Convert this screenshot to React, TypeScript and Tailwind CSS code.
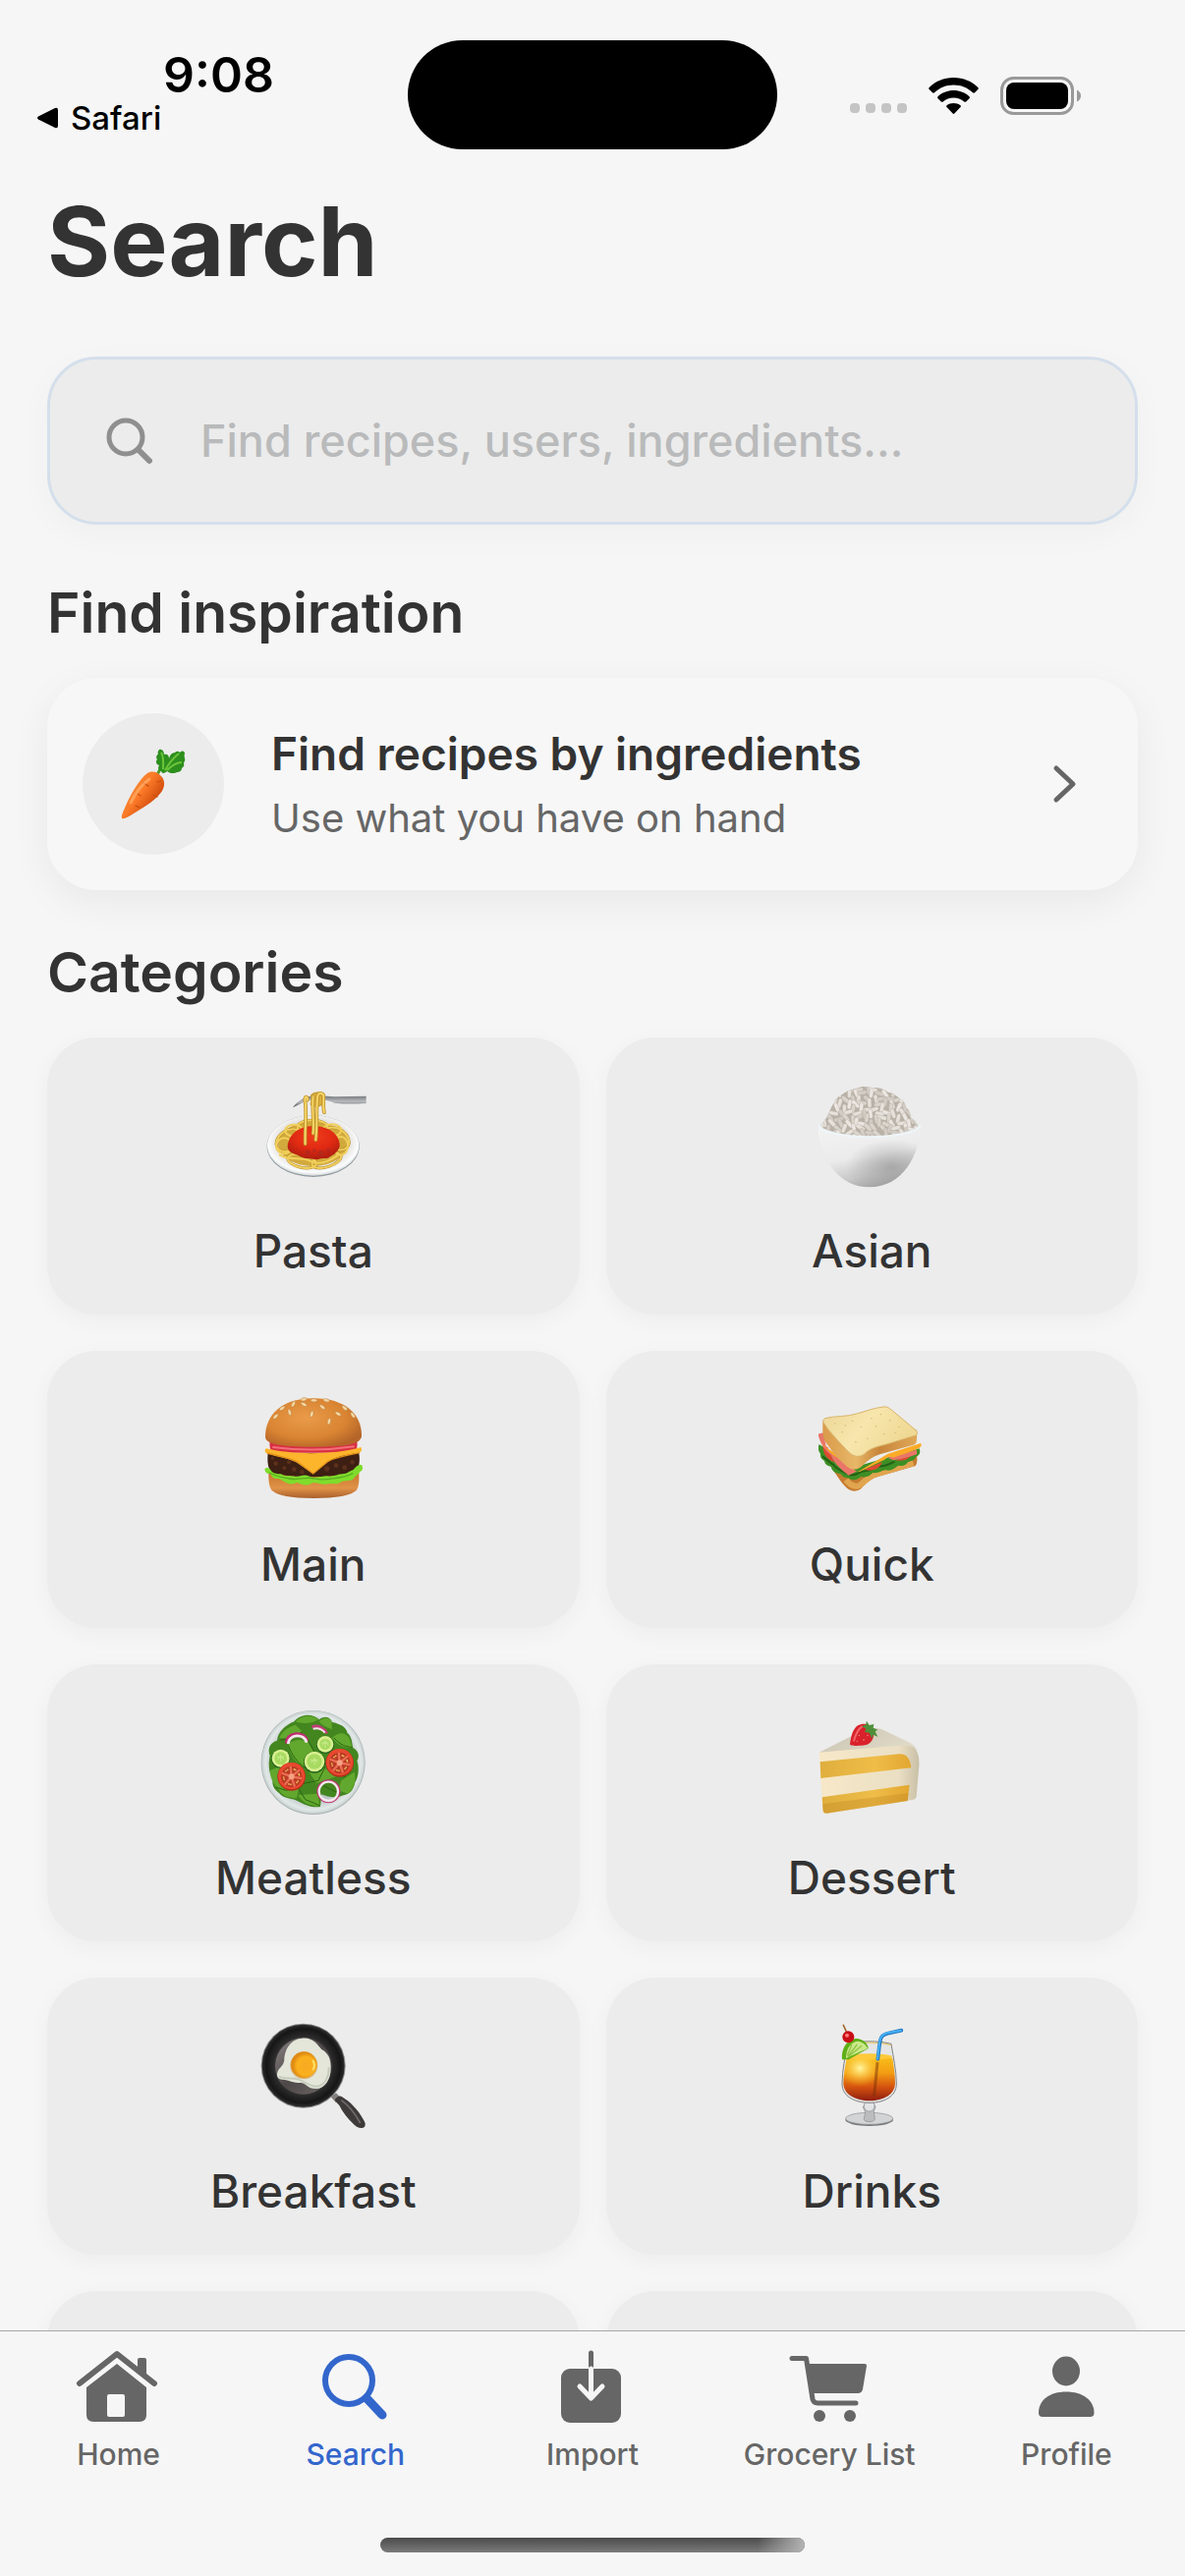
import type { ReactNode } from "react";

const grains = Array.from({ length: 14 * 11 }, (_, i) => {
  const col = i % 14;
  const row = Math.floor(i / 14);
  const noise = (n: number) => Math.abs(Math.sin((i + 1) * n) * 9301) % 1;
  return {
    x: 106 + col * 23 + (row % 2) * 11 + noise(3.1) * 10,
    y: 84 + row * 15 + noise(5.7) * 8,
    turn: noise(7.3) * 150 - 35,
    tone: ["#e6e1da", "#dad5cc", "#d3cdc6", "#ebe6e1"][Math.floor(noise(2.3) * 4)],
  };
});

function Pasta() {
  return (
    <svg viewBox="103 69 324 324" className="size-27" aria-hidden="true">
      <defs>
        <radialGradient id="plate" cx="50%" cy="45%" r="55%">
          <stop offset="0.7" stopColor="#e4e2e0" />
          <stop offset="0.9" stopColor="#fbfcfc" />
          <stop offset="1" stopColor="#d3d8db" />
        </radialGradient>
        <radialGradient id="sauce" cx="50%" cy="30%" r="65%">
          <stop offset="0" stopColor="#f03c1c" />
          <stop offset="0.6" stopColor="#e02a12" />
          <stop offset="1" stopColor="#b51f10" />
        </radialGradient>
        <linearGradient id="fork" x1="0" x2="0" y1="0" y2="1">
          <stop offset="0" stopColor="#707375" />
          <stop offset="0.5" stopColor="#b9bcbe" />
          <stop offset="1" stopColor="#4e5052" />
        </linearGradient>
      </defs>
      <ellipse cx="264" cy="263" rx="141" ry="94" fill="#8f989d" />
      <ellipse cx="264" cy="261" rx="140" ry="92" fill="url(#plate)" />
      <ellipse cx="263" cy="256" rx="106" ry="68" fill="#d2a93c" />
      <g fill="none" strokeLinecap="round">
        <g stroke="#b98a26" strokeWidth="9">
          <ellipse cx="190" cy="245" rx="42" ry="30" transform="rotate(-35 190 245)" />
          <ellipse cx="335" cy="240" rx="42" ry="30" transform="rotate(35 335 240)" />
          <ellipse cx="230" cy="308" rx="44" ry="20" transform="rotate(12 230 308)" />
          <ellipse cx="305" cy="306" rx="46" ry="20" transform="rotate(-18 305 306)" />
          <ellipse cx="262" cy="204" rx="46" ry="20" />
        </g>
        <g stroke="#f0cf5b" strokeWidth="6">
          <ellipse cx="190" cy="245" rx="42" ry="30" transform="rotate(-35 190 245)" />
          <ellipse cx="335" cy="240" rx="42" ry="30" transform="rotate(35 335 240)" />
          <ellipse cx="230" cy="308" rx="44" ry="20" transform="rotate(12 230 308)" />
          <ellipse cx="305" cy="306" rx="46" ry="20" transform="rotate(-18 305 306)" />
          <ellipse cx="262" cy="204" rx="46" ry="20" />
          <ellipse cx="176" cy="262" rx="25" ry="24" />
          <ellipse cx="348" cy="262" rx="22" ry="28" />
          <ellipse cx="205" cy="215" rx="26" ry="18" />
          <ellipse cx="322" cy="214" rx="28" ry="18" />
          <path d="M162 290c30 20 60 2 92 18s62 0 86-18" />
        </g>
      </g>
      <path d="M186 264c4-38 34-62 79-62 48 0 77 24 80 54 2 18-14 32-28 38-10 10-24 4-34 8-14 4-24-2-36-2-18 0-24-8-36-12-14-4-24-10-25-24z" fill="url(#sauce)" />
      <g fill="#a82a24" opacity="0.55">
        <circle cx="248" cy="282" r="8" /><circle cx="268" cy="276" r="6" /><circle cx="288" cy="284" r="9" /><circle cx="310" cy="276" r="6" />
      </g>
      <path d="M202 145c14-22 40-35 68-37l60 4 96-2v22c-34 2-66 3-96-1-20-8-48-14-76-9-18 4-34 14-52 23z" fill="url(#fork)" />
      <g fill="none" strokeLinecap="round">
        <path d="M258 108c10-12 30-12 34 2v24c-8 10-28 10-36 0" fill="#d9ae3e" stroke="#c69b33" strokeWidth="4" />
        <g stroke="#c0922c" strokeWidth="11">
          <path d="M240 256c-2-48 6-92-1-136 0-10 8-10 8 2" />
          <path d="M264 224c4-36-4-74 0-112M272 244c6-50 0-92 6-136 4-10 20-8 18 6 0 16-2 30 2 46" />
        </g>
        <g stroke="#f5d667" strokeWidth="6">
          <path d="M240 256c-2-48 6-92-1-136 0-10 8-10 8 2" />
          <path d="M264 224c4-36-4-74 0-112M272 244c6-50 0-92 6-136 4-10 20-8 18 6 0 16-2 30 2 46" />
        </g>
      </g>
    </svg>
  );
}

function Rice() {
  return (
    <svg viewBox="100 69 324 324" className="size-27" aria-hidden="true">
      <defs>
        <linearGradient id="bowl" x1="0.3" y1="0" x2="0.6" y2="1">
          <stop offset="0" stopColor="#f2f2f2" />
          <stop offset="0.5" stopColor="#ebebeb" />
          <stop offset="0.8" stopColor="#c9c9c9" />
          <stop offset="1" stopColor="#a5a5a5" />
        </linearGradient>
        <radialGradient id="bowlShade" cx="72%" cy="68%" r="45%">
          <stop offset="0" stopColor="#8e8e90" stopOpacity="0.6" />
          <stop offset="1" stopColor="#8e8e90" stopOpacity="0" />
        </radialGradient>
        <clipPath id="mound">
          <path d="M104 204c10-16 22-26 28-42 10-24 20-50 42-58 12-12 34-14 50-20 14-6 26 0 40 0 18 0 36 4 48 14 14 2 26 10 36 20 14 6 16 18 20 28 14 10 10 22 16 32 10 6 14 14 22 26-80 40-220 40-302 0z" />
        </clipPath>
      </defs>
      <g clipPath="url(#mound)">
        <rect x="100" y="76" width="320" height="170" fill="#b9b2a8" />
        {grains.map((g, i) => (
          <rect key={i} x={g.x - 15} y={g.y - 6} width="30" height="12" rx="6" fill={g.tone} stroke="#b0a89d" strokeWidth="1" transform={`rotate(${g.turn} ${g.x} ${g.y})`} />
        ))}
      </g>
      <path d="M98 198c2 90 56 190 158 190s154-100 156-190c-4 20-66 39-157 39S104 222 98 198z" fill="url(#bowl)" />
      <path d="M98 198c2 90 56 190 158 190s154-100 156-190c-4 20-66 39-157 39S104 222 98 198z" fill="url(#bowlShade)" />
      <path d="M100 198c6 20 66 37 155 37s150-17 156-37" fill="none" stroke="#eef5f8" strokeWidth="7" />
    </svg>
  );
}

function Burger() {
  return (
    <svg viewBox="103 66 324 324" className="size-27" aria-hidden="true">
      <defs>
        <radialGradient id="bun" cx="42%" cy="40%" r="65%">
          <stop offset="0" stopColor="#e99b4a" />
          <stop offset="0.65" stopColor="#d98432" />
          <stop offset="1" stopColor="#b5652a" />
        </radialGradient>
        <linearGradient id="heel" x1="0" y1="0" x2="0" y2="1">
          <stop offset="0" stopColor="#c9772e" />
          <stop offset="0.6" stopColor="#e09348" />
          <stop offset="1" stopColor="#a95f2b" />
        </linearGradient>
      </defs>
      <path d="M128 300h276c0 20 2 40-8 54-16 16-60 24-130 24s-112-8-128-24c-10-14-10-34-10-54z" fill="url(#heel)" />
      <path d="M126 240h278c4 24 0 46-10 60-80 18-180 16-256 2-14-16-14-42-12-62z" fill="#3d2013" />
      <g fill="#5c301c">
        <circle cx="150" cy="272" r="7" /><circle cx="176" cy="286" r="6" /><circle cx="206" cy="290" r="7" /><circle cx="190" cy="268" r="6" /><circle cx="306" cy="288" r="8" /><circle cx="334" cy="278" r="7" /><circle cx="360" cy="284" r="7" /><circle cx="384" cy="268" r="7" /><circle cx="230" cy="298" r="7" /><circle cx="140" cy="256" r="5" />
      </g>
      <path d="M116 290c6-10 14-2 16-2 6 14 20 16 34 16 14 10 30 4 44 8 14 0 26-8 40-2 22 10 40 0 56 0 16 4 34-6 48-6 14 0 22-10 32-12 8-10 14-18 26-16 6 8 4 18-6 22-4 10-14 12-18 20-12 10-26 4-38 10-12 10-26 4-40 6-20 6-34-8-50-2-16 10-32 4-44-2-12 4-22 8-34 0-14-6-18-14-32-12-12-2-12-10-18-16-10 4-16-6-16-14z" fill="#7fdc2c" />
      <path d="M130 300c20 12 40 14 60 18s40 0 56-2 40 8 60 4 50-2 80-18" fill="none" stroke="#5bae1f" strokeWidth="4" />
      <path d="M132 205h266c2 12 0 24-6 34H140c-8-8-10-22-8-34z" fill="#d92f42" />
      <path d="M140 222c80 10 170 10 250-2" fill="none" stroke="#f2707a" strokeWidth="6" />
      <path d="M120 226c80 20 210 20 290-4 4 6 2 12-2 16-40 8-70 12-96 26l-48 40-52-36c-30-14-62-18-92-28-4-4-4-10 0-14z" fill="#fdb52c" />
      <path d="M124 240c40 12 70 14 94 28l46 35 46-38c26-14 60-18 96-26" fill="none" stroke="#e3921a" strokeWidth="4" />
      <path d="M118 190c0-66 50-117 147-117s147 48 147 114c0 16-20 24-40 28-60 8-154 8-214 0-22-4-40-10-40-25z" fill="url(#bun)" />
      <g fill="#f3d7a4" stroke="#bd7b35" strokeWidth="1.5">
        {[[150, 128, 45], [170, 103, 55], [192, 115, -15], [235, 91, -60], [260, 120, 15], [292, 99, -50], [313, 143, 15], [340, 120, -60], [360, 102, -50], [385, 124, -35], [204, 90, 30], [267, 79, 90], [304, 79, -75], [236, 76, 80]].map(([x, y, r]) => (
          <path key={`${x}-${y}`} d="M0-11c6 6 7 18 0 22-7-4-6-16 0-22z" transform={`translate(${x} ${y}) rotate(${r})`} />
        ))}
      </g>
    </svg>
  );
}

function Sandwich() {
  return (
    <svg viewBox="100 66 324 324" className="size-27" aria-hidden="true">
      <defs>
        <linearGradient id="slice" x1="0" y1="0" x2="1" y2="0.4">
          <stop offset="0" stopColor="#ecd695" />
          <stop offset="0.5" stopColor="#f7e6ad" />
          <stop offset="1" stopColor="#efd893" />
        </linearGradient>
        <linearGradient id="crust" x1="0" y1="0" x2="1" y2="0">
          <stop offset="0" stopColor="#d99a4a" />
          <stop offset="0.35" stopColor="#e8b768" />
          <stop offset="0.6" stopColor="#c98539" />
          <stop offset="1" stopColor="#dfa858" />
        </linearGradient>
      </defs>
      <path d="M130 262c16 36 40 70 58 86 18 14 38 8 48-6 16-18 28-24 46-30l112-32c8-4 8-20 6-40L220 300z" fill="#c57c31" />
      <path d="M184 322c10 14 24 22 40 18 18-12 26-28 52-36l114-33" fill="none" stroke="#e2a54f" strokeWidth="18" />
      <path d="M102 214c-6 10-2 20 4 28-2 12 6 18 12 22 2 14 12 14 20 18 4 18 20 20 30 22 8 14 22 10 30 16 14 6 24-2 32-8 16 4 26-2 36-12 18 4 26-8 40-8 16 4 26-6 38-14 16 4 26-4 30-12 14-2 22-6 22-14 14-4 16-14 12-26L220 280z" fill="#3e8f25" />
      <path d="M112 250c12 6 20 20 34 26 12 16 28 20 44 28 18 10 30-4 44-8 20 0 34-10 48-16 22 2 34-6 50-14" fill="none" stroke="#226115" strokeWidth="6" />
      <path d="M114 216c-2 24 10 42 34 52l-20-46zM240 290c20 8 48 0 54-22zM336 262c16 4 36 0 46-14z" fill="#dd4a31" />
      <path d="M98 182l16-4 10 44 92 74-24 12c-22-16-44-36-54-62-20-16-32-34-40-64zM312 254l88-24v14c-24 8-44 14-72 18z" fill="#e97669" />
      <path d="M102 194c12 20 20 30 36 38 30 22 50 50 82 66l92-56 100-32c4 4 2 12-4 14-24 12-52 20-80 30-10-6-18-2-26 6l-78 38c-26-6-44-30-74-48-24-18-36-36-48-56z" fill="#fcaa28" />
      <path d="M113 148c0-8 4-12 10-12 2 24 34 60 60 90 18 22 40 22 54 4 14-20 32-22 56-30l106-32c2 14 2 30 0 38-2 6-6 8-12 10l-86 24c-32 8-48 20-66 38-20 18-38 14-54-2-26-22-40-44-60-70-10-16-8-36-8-58z" fill="url(#crust)" />
      <path d="M120 134c30-8 64-4 96-14 30-8 54-18 82-21 12-2 18 4 26 10l74 62c6 6 4 14-4 16l-86 26c-28 8-48 10-68 30-16 12-34 8-48-6-28-30-56-58-74-86-6-8-4-14 2-17z" fill="url(#slice)" stroke="#d9b56b" strokeWidth="3" />
      <g fill="#cfb06a">
        {[[150, 150], [172, 176], [204, 142], [230, 160], [262, 134], [290, 122], [318, 140], [346, 160], [300, 182], [214, 206], [250, 196], [276, 158], [182, 156], [334, 178]].map(([x, y]) => <circle key={x} cx={x} cy={y} r="2" />)}
      </g>
    </svg>
  );
}

function Tomato({ x, y }: { x: number; y: number }) {
  return (
    <g transform={`translate(${x} ${y})`}>
      <circle r="43" fill="#b52d1c" />
      <circle r="41" cy="-2" fill="#e8492f" />
      <circle r="32" fill="#bb3a26" />
      <g stroke="#e96f52" strokeWidth="7" strokeLinecap="round">
        {[10, 72, 130, 200, 265, 320].map((a) => <line key={a} x2="29" transform={`rotate(${a})`} />)}
      </g>
      <circle r="9" fill="#f5a183" />
      <g fill="#eac25c">
        {[35, 48, 95, 110, 160, 175, 225, 240, 290, 300, 340, 350].map((a) => <circle key={a} cx="24" r="2.6" transform={`rotate(${a})`} />)}
      </g>
    </g>
  );
}

function Cucumber({ x, y, r }: { x: number; y: number; r: number }) {
  return (
    <g transform={`translate(${x} ${y})`}>
      <circle r={r} cy="2" fill="#1f5c1a" />
      <circle r={r - 2} fill="#d9f08f" />
      <circle r={r - 10} fill="#a8da62" />
      <path d="M-10 4l10-12 10 12M-12-4h22M0-12v22" stroke="#c8ec8c" strokeWidth="3" fill="none" />
    </g>
  );
}

function Salad() {
  return (
    <svg viewBox="103 63 324 324" className="size-27" aria-hidden="true">
      <defs>
        <radialGradient id="dish">
          <stop offset="0.75" stopColor="#bcc6c6" />
          <stop offset="0.93" stopColor="#e2e8e8" />
          <stop offset="1" stopColor="#c8d0d0" />
        </radialGradient>
      </defs>
      <circle cx="264" cy="225" r="159" fill="#a8b1b1" />
      <circle cx="264" cy="224" r="157" fill="url(#dish)" />
      <path d="M206 100c18-24 58-26 76-6 14-12 34-10 40 8 22 4 44 14 46 32 16 12 14 32 18 46 18 10 20 26 12 40 8 22 4 50-6 66-4 22-16 38-40 40-20 10-42 4-62-4l-4 38c-26 4-48-6-66-16-20-12-46-6-60-26-14-10-24-24-18-42-16-20-14-52-10-72-8-20 0-40 22-46 2-26 24-46 52-58z" fill="#43861f" />
      <g fill="#62a82e">
        <path d="M210 100c20-20 52-22 70-6-16 10-44 16-70 6zM282 100c12-14 28-14 38-2l2 26c-16-6-30-12-40-24zM160 150c10-22 28-34 50-40l20 20c-20 14-44 24-70 20z" />
        <path d="M186 170c18-16 40-18 62-8l26 44-36 34c-26-12-44-36-52-70zM322 150c20-20 40-18 52 0l10 30c-26 2-44-8-62-30z" />
        <path d="M132 250l36-16 40 70-40 10c-20-14-34-34-36-64zM250 252l44-14 40 30-60 20zM350 280l40-26c6 24 0 50-20 66l-30-10z" />
        <path d="M160 310l60-6-6 30c-22 0-44-6-54-24zM218 324l60-4 6 38c-26 0-52-8-66-34z" />
      </g>
      <g fill="none" stroke="#2a6312" strokeWidth="3">
        <path d="M164 156c30 0 50-14 66-24M188 172c10 30 30 54 50 68M250 160l26 46M300 240l-20 40-50 10M336 316l-40-20M220 304l20 34 44 18M328 150c20 22 36 28 56 28M384 220l-26 50M150 300l30 10 30-6" />
      </g>
      <path d="M183 166c-2-36 58-38 62-6" fill="none" stroke="#bf2e70" strokeWidth="10" />
      <path d="M188 168c0-30 50-34 56-4" fill="none" stroke="#f6e7ef" strokeWidth="8" />
      <path d="M260 116c20-6 38 4 46 20" fill="none" stroke="#c53a78" strokeWidth="9" />
      <path d="M264 122c16-4 28 2 36 12" fill="none" stroke="#f6e2ec" strokeWidth="6" />
      <Cucumber x={301} y={169} r={27} />
      <Cucumber x={165} y={212} r={29} />
      <Cucumber x={268} y={222} r={33} />
      <Tomato x={198} y={268} />
      <Tomato x={345} y={226} />
      <circle cx="311" cy="313" r="33" fill="none" stroke="#bd3572" strokeWidth="6" />
      <circle cx="311" cy="313" r="29" fill="none" stroke="#f3e9ee" strokeWidth="7" />
    </svg>
  );
}

function Cake() {
  return (
    <svg viewBox="100 63 324 324" className="size-27" aria-hidden="true">
      <defs>
        <linearGradient id="icing" x1="0" y1="0" x2="1" y2="0.5">
          <stop offset="0" stopColor="#c9c2b0" />
          <stop offset="1" stopColor="#dfd9c7" />
        </linearGradient>
        <linearGradient id="sponge" x1="0" y1="0" x2="1" y2="0">
          <stop offset="0" stopColor="#dfae3d" />
          <stop offset="0.6" stopColor="#efbd48" />
          <stop offset="1" stopColor="#e2a731" />
        </linearGradient>
        <linearGradient id="cream" x1="0" y1="0" x2="1" y2="0">
          <stop offset="0" stopColor="#f7e8c8" />
          <stop offset="0.8" stopColor="#eadfc4" />
          <stop offset="1" stopColor="#c8bfa6" />
        </linearGradient>
      </defs>
      <path d="M102 196l8-6 260-26c28 10 40 36 37 72l-8 92c-2 8-6 10-12 11l-265 41c-6 0-8-2-9-8z" fill="url(#cream)" />
      <path d="M102 194l140-70c16-6 34-6 52 0l80 38c16 8 24 16 28 28-8-12-24-18-42-18z" fill="url(#icing)" />
      <path d="M105 223l242-24c20-2 34 14 36 42L107 273z" fill="url(#sponge)" />
      <path d="M111 331l267-38-6 49-247 38c-8 0-10-2-11-8z" fill="url(#sponge)" />
      <path d="M112 352l263-34-3 24-247 38c-8 0-10-2-11-8z" fill="#b87f1d" opacity="0.3" />
      <path d="M196 168c4-24 8-44 24-56 16-10 44-4 48 18 4 20-8 40-26 42-14 2-48 4-46-4z" fill="#d9222b" />
      <path d="M208 158c6-20 12-34 24-42" fill="none" stroke="#f2656a" strokeWidth="6" strokeLinecap="round" />
      <g fill="#f5a09b"><circle cx="224" cy="142" r="2" /><circle cx="238" cy="156" r="2" /><circle cx="250" cy="142" r="2" /><circle cx="218" cy="160" r="2" /></g>
      <path d="M232 114l12-4 3-12 8 13 14-3-2 11 14 6-8 5 8 16-14-6-4 12-8-18-14-2 4-10z" fill="#4f8f3a" />
    </svg>
  );
}

function FryingPan() {
  return (
    <svg viewBox="103 60 324 324" className="size-27" aria-hidden="true">
      <defs>
        <radialGradient id="pan">
          <stop offset="0.62" stopColor="#4c4848" />
          <stop offset="0.72" stopColor="#2b2a2a" />
          <stop offset="0.9" stopColor="#161616" />
          <stop offset="1" stopColor="#2c2c2c" />
        </radialGradient>
        <linearGradient id="base" x1="0" y1="0" x2="1" y2="1">
          <stop offset="0" stopColor="#8b8585" />
          <stop offset="0.5" stopColor="#4d4847" />
          <stop offset="1" stopColor="#6e6867" />
        </linearGradient>
        <radialGradient id="yolk" cx="58%" cy="55%">
          <stop offset="0" stopColor="#f7a823" />
          <stop offset="0.7" stopColor="#f9b11e" />
          <stop offset="1" stopColor="#e18b12" />
        </radialGradient>
      </defs>
      <path d="M318 286l16-12 16 16-16 14z" fill="#85817f" />
      <path d="M330 296c4-10 16-16 22-10 24 14 48 38 66 70 8 12 6 22-2 24-8 4-20-2-28-10-20-20-34-38-44-58-6-8-10-10-14-16z" fill="#3e3a3a" />
      <path d="M350 296c22 16 42 40 58 70" fill="none" stroke="#716b6b" strokeWidth="5" />
      <circle cx="234" cy="191" r="129" fill="#858585" />
      <circle cx="234" cy="191" r="126" fill="url(#pan)" />
      <circle cx="234" cy="192" r="86" fill="url(#base)" />
      <path d="M176 170c2-30 20-62 56-63 34-2 44 20 58 34 22 12 28 30 28 56 0 36-18 64-46 64-26 0-28-16-44-18-26 0-38-8-56-10-22 2-22-22-10-34 8-10 14-16 14-29z" fill="#e4e6da" />
      <path d="M160 224c20 10 40 2 58 8s30 20 54 22c28 0 40-28 40-58" fill="none" stroke="#c6ccbc" strokeWidth="6" />
      <circle cx="236" cy="190" r="42" fill="#c88a32" opacity="0.5" />
      <circle cx="236" cy="188" r="40" fill="url(#yolk)" />
      <path d="M264 176c5 9 5 18 0 26" fill="none" stroke="#ffe06a" strokeWidth="6" strokeLinecap="round" />
    </svg>
  );
}

function Drink() {
  return (
    <svg viewBox="100 60 324 324" className="size-27" aria-hidden="true">
      <defs>
        <linearGradient id="juice" x1="0" y1="0" x2="0" y2="1">
          <stop offset="0" stopColor="#f9c51c" />
          <stop offset="0.4" stopColor="#f39c13" />
          <stop offset="0.7" stopColor="#d4530f" />
          <stop offset="1" stopColor="#8f1d10" />
        </linearGradient>
        <radialGradient id="glow" cx="32%" cy="30%" r="40%">
          <stop offset="0" stopColor="#fff6a0" />
          <stop offset="1" stopColor="#ffc21a" stopOpacity="0" />
        </radialGradient>
      </defs>
      <ellipse cx="255" cy="356" rx="73" ry="19" fill="#77797a" />
      <ellipse cx="255" cy="352" rx="72" ry="18" fill="#d3d4d5" stroke="#8e9091" strokeWidth="2" />
      <path d="M246 298h20l8 20c-4 8-6 12-4 22 2 14 6 20-14 22-22-2-18-8-14-22 2-10-2-14-6-22z" fill="#bcbdbe" stroke="#85878a" strokeWidth="2" />
      <circle cx="255" cy="314" r="16" fill="#e3e4e5" stroke="#8e9091" strokeWidth="2" />
      <path d="M188 124c40-10 96-10 134 0 6 40 16 80 16 122 0 38-36 58-82 58s-84-20-84-58c0-42 10-82 16-122z" fill="#e4e5e4" stroke="#808284" strokeWidth="3" />
      <path d="M186 168c44-16 98-16 140 0 4 26 8 48 8 76 0 34-34 54-78 54s-80-20-80-54c0-26 6-50 10-76z" fill="url(#juice)" />
      <path d="M186 168c44-16 98-16 140 0 4 26 8 48 8 76 0 34-34 54-78 54s-80-20-80-54c0-26 6-50 10-76z" fill="url(#glow)" />
      <ellipse cx="256" cy="163" rx="69" ry="9" fill="#ffc93a" />
      <path d="M190 126c40-8 94-8 132 2" fill="none" stroke="#e8c355" strokeWidth="3" />
      <path d="M280 180l-10 104" stroke="#7b3208" strokeWidth="9" opacity="0.5" />
      <path d="M281 170c4-26 4-48 10-64 4-10 12-12 20-14l42-9" fill="none" stroke="#1f77c4" strokeWidth="11" strokeLinecap="round" />
      <path d="M280 170c4-26 4-48 10-64 4-10 12-13 20-15l42-8" fill="none" stroke="#48b1f4" strokeWidth="6" strokeLinecap="round" />
      <path d="M172 172c-4-40 22-66 48-64 20 4 32 18 32 30l-60 34z" fill="#5fae17" />
      <path d="M184 168c0-32 16-50 36-52 16 2 26 12 30 22z" fill="#cbe88b" />
      <path d="M190 162l28-36M190 164l42-34M188 160l14-34" stroke="#8fc444" strokeWidth="4" />
      <path d="M176 67l12 26" stroke="#a36a33" strokeWidth="5" strokeLinecap="round" />
      <circle cx="191" cy="103" r="18" fill="#c90d16" />
      <circle cx="187" cy="98" r="6" fill="#ff7a78" />
    </svg>
  );
}

function Carrot() {
  return (
    <svg viewBox="0 0 72 72" className="size-18" aria-hidden="true">
      <defs>
        <linearGradient id="carrotSkin" x1="0.2" y1="0.3" x2="0.7" y2="0.7">
          <stop offset="0" stopColor="#f58a35" />
          <stop offset="0.45" stopColor="#fb7a28" />
          <stop offset="1" stopColor="#d5500f" />
        </linearGradient>
      </defs>
      <path d="M40 27c2-6 6-10 9-14" stroke="#4a9a2c" strokeWidth="3" fill="none" />
      <path d="M42 1c3-1 5 2 5 5 4-1 5 2 5 4 1-4 3-6 6-6 2-2 4-1 5 0 3-3 5-1 5 1-1 2 0 4 0 5 1 2-1 4-1 5 1 3-1 4-2 5 0 3-3 4-5 4-3 2-8 1-10-1-2 2-5 3-6 0-4-2-3-4-2-6-3-1-4-4-2-6-2-3 0-5 1-5-1-2 0-4 1-5z" fill="#2d8f1e" />
      <path d="M44 4c3 5 2 10 2 17M62 5c-5 4-9 8-14 17M65 14c-6 0-10 3-15 8" stroke="#6cc43a" strokeWidth="2" fill="none" />
      <path d="M4 71c-1-3 2-8 4-13C14 44 23 30 30 25c5-3 11-1 14 3 4 4 4 10 1 15-5 8-17 16-29 23-5 3-9 6-12 5z" fill="url(#carrotSkin)" />
      <path d="M26 35l5 3M36 47l4 2M20 46l3 2M18 58l4 2M40 34l4-1" stroke="#cf5414" strokeWidth="1.5" strokeLinecap="round" />
      <path d="M13 55c5-10 12-19 19-24" fill="none" stroke="#ffb06a" strokeWidth="3" strokeLinecap="round" opacity="0.7" />
    </svg>
  );
}

const categories: { name: string; art: ReactNode }[] = [
  { name: "Pasta", art: <Pasta /> },
  { name: "Asian", art: <Rice /> },
  { name: "Main", art: <Burger /> },
  { name: "Quick", art: <Sandwich /> },
  { name: "Meatless", art: <Salad /> },
  { name: "Dessert", art: <Cake /> },
  { name: "Breakfast", art: <FryingPan /> },
  { name: "Drinks", art: <Drink /> },
];

const tabs: { name: string; icon: ReactNode }[] = [
  {
    name: "Home",
    icon: (
      <>
        <path d="M8 38L46 8l38 30" fill="none" stroke="currentColor" strokeWidth="6" strokeLinecap="round" strokeLinejoin="round" />
        <path d="M67 24V14q0-2 2-2h5q2 0 2 2v18z" fill="currentColor" />
        <path fillRule="evenodd" d="M46 18L76 42v28q0 7-7 7H22q-7 0-7-7V42zM38 49q-2 0-2 2v19q0 2 2 2h14q2 0 2-2V51q0-2-2-2z" fill="currentColor" />
      </>
    ),
  },
  {
    name: "Search",
    icon: (
      <g fill="none" stroke="currentColor" strokeLinecap="round">
        <circle cx="41" cy="35" r="24" strokeWidth="6" />
        <path d="M60 54l15 16" strokeWidth="9" />
      </g>
    ),
  },
  {
    name: "Import",
    icon: (
      <>
        <rect x="16" y="23" width="61" height="55" rx="9" fill="currentColor" />
        <path d="M46.500 7v16" stroke="currentColor" strokeWidth="5" strokeLinecap="round" />
        <path d="M46.500 23v29M35 41l11.500 12L58 41" fill="none" stroke="#f6f6f6" strokeWidth="5" strokeLinecap="round" strokeLinejoin="round" />
      </>
    ),
  },
  {
    name: "Grocery List",
    icon: (
      <>
        <path d="M10 12.500h14.500L31 54q1 4 5 4h39" fill="none" stroke="currentColor" strokeWidth="5" strokeLinecap="round" strokeLinejoin="round" />
        <path d="M26 18h58q2 0 2 2l-4 24q-1 4-5 4H31z" fill="currentColor" />
        <circle cx="38" cy="71" r="6" fill="currentColor" />
        <circle cx="69" cy="71" r="6" fill="currentColor" />
      </>
    ),
  },
  {
    name: "Profile",
    icon: (
      <>
        <ellipse cx="48" cy="25.500" rx="14" ry="15" fill="currentColor" />
        <path d="M20 68c0-13 11-21.500 28-21.500S76.500 55 76.500 68q0 4-4 4H24q-4 0-4-4z" fill="currentColor" />
      </>
    ),
  },
];

const cardLook = "flex flex-col items-center rounded-[50px] bg-[#ececec] shadow-[0_6px_24px_rgba(0,0,0,0.04)]";

function StatusBar() {
  return (
    <div className="relative flex h-[186px] shrink-0 items-start justify-between pr-[106px] pl-9 text-black">
      <div className="pt-11">
        <div className="pl-[130px] text-[50px] leading-[64px] font-semibold">9:08</div>
        <a href="#safari" className="flex items-center gap-3 text-[33px] leading-6 font-medium">
          <svg viewBox="0 0 24 24" className="size-6" aria-hidden="true">
            <path d="M3 10.500Q1 12 3 13.500L20 22q3 1 3-2V4q0-3-3-2z" fill="currentColor" />
          </svg>
          Safari
        </a>
      </div>
      <div className="absolute top-[41px] left-1/2 h-[111px] w-[376px] -translate-x-1/2 rounded-full bg-black" />
      <div className="flex items-center gap-[22px] pt-[78px]">
        <div className="flex gap-[6px] pt-6">
          <span className="size-[10px] rounded-[4px] bg-[#c4c4c4]" />
          <span className="size-[10px] rounded-[4px] bg-[#c4c4c4]" />
          <span className="size-[10px] rounded-[4px] bg-[#c4c4c4]" />
          <span className="size-[10px] rounded-[4px] bg-[#c4c4c4]" />
        </div>
        <svg viewBox="0 0 51 38" className="h-[38px] w-[51px]" aria-label="Wi-Fi">
          <path d="M25.500 0C35.500 0 44 3.800 50.300 10q1 1 0 2l-3.300 3.300q-1 .9-2 0C39.600 10.300 33 7.600 25.500 7.600S11.400 10.300 6 15.300q-1 .9-2 0L.7 12q-1-1 0-2C7 3.800 15.500 0 25.500 0z" />
          <path d="M25.500 13c6.200 0 11.800 2.300 16 6.200q1 1 0 2l-3.300 3.200q-1 .9-2 0c-3-2.500-6.600-3.900-10.700-3.900s-7.700 1.400-10.700 3.900q-1 .9-2 0l-3.300-3.200q-1-1 0-2c4.200-3.900 9.800-6.200 16-6.200z" />
          <path d="M25.500 26c2.600 0 5 .8 7 2.300q1 .9 0 1.800l-5.900 6.200q-1.100 1.200-2.200 0l-5.900-6.200q-1-.9 0-1.800c2-1.500 4.400-2.300 7-2.300z" />
        </svg>
        <svg viewBox="0 0 82 39" className="h-[39px] w-[82px]" aria-label="Battery">
          <rect x="1.500" y="1.500" width="72" height="36" rx="12" fill="none" stroke="#999" strokeWidth="3" />
          <rect x="6" y="6" width="63" height="27" rx="8" />
          <path d="M78 13.500q4 2 4 6t-4 6z" fill="#999" />
        </svg>
      </div>
    </div>
  );
}

export default function App() {
  return (
    <div className="flex h-screen flex-col bg-[#f6f6f6] font-['Inter','Liberation_Sans',sans-serif] text-[#333]">
      <StatusBar />
      <main className="min-h-0 flex-1 overflow-y-auto px-12 [scrollbar-width:none]">
        <h1 className="text-[98px] leading-[120px] font-bold">Search</h1>
        <label className="mt-[57px] flex h-[171px] items-center gap-12 rounded-[50px] border-3 border-[#d4dfec] bg-[#ececec] px-[57px] shadow-[0_9px_36px_rgba(0,0,0,0.03)]">
          <svg viewBox="0 0 48 48" className="size-12 shrink-0" fill="none" stroke="#8f8f8f" strokeLinecap="round" aria-hidden="true">
            <circle cx="20" cy="20" r="17" strokeWidth="5" />
            <path d="M33 33l11 11" strokeWidth="6" />
          </svg>
          <input
            type="search"
            aria-label="Find recipes, users, ingredients"
            placeholder="Find recipes, users, ingredients..."
            className="min-w-0 flex-1 bg-transparent text-[45px] leading-[60px] font-medium outline-none placeholder:text-[#b9babb]"
          />
        </label>

        <h2 className="mt-[54px] text-[57px] leading-[72px] font-semibold">Find inspiration</h2>
        <button className="mt-[30px] flex w-full items-center rounded-[50px] bg-[#f7f7f7] py-9 pr-[60px] pl-9 text-left shadow-[0_12px_42px_rgba(0,0,0,0.06)]">
          <span className="flex size-36 shrink-0 items-center justify-center rounded-full bg-[#ececec]">
            <Carrot />
          </span>
          <span className="ml-12 flex flex-1 flex-col gap-1 pt-1">
            <span className="text-[46px] leading-[62px] font-semibold">Find recipes by ingredients</span>
            <span className="text-[40px] leading-[62px] text-[#666]">Use what you have on hand</span>
          </span>
          <svg viewBox="0 0 28 40" className="h-10 w-7" fill="none" stroke="#666" strokeWidth="5" strokeLinecap="round" strokeLinejoin="round" aria-hidden="true">
            <path d="M5 4l17 16L5 36" />
          </svg>
        </button>

        <h2 className="mt-12 text-[57px] leading-[72px] font-semibold">Categories</h2>
        <div className="mt-[30px] grid grid-cols-2 gap-x-[27px] gap-y-[37px]">
          {categories.map((c) => (
            <button key={c.name} className={`${cardLook} pt-[46px] pb-[37px]`}>
              {c.art}
              <span className="mt-[35px] text-[46px] leading-[56px] font-medium">{c.name}</span>
            </button>
          ))}
          <div className={`${cardLook} h-[282px]`} />
          <div className={`${cardLook} h-[282px]`} />
        </div>
      </main>
      <nav className="relative flex h-[250px] shrink-0 items-start border-t border-[#a8a8a8] bg-[#f6f6f6] pt-[15px]">
        {tabs.map((t) => (
          <a
            key={t.name}
            href={`#${t.name}`}
            className={`flex flex-1 basis-0 flex-col items-center gap-2 text-[30px] leading-9 font-medium whitespace-nowrap ${t.name === "Search" ? "text-[#3366cc]" : "text-[#666]"}`}
          >
            <svg viewBox="0 0 96 84" className="h-[84px] w-24" aria-hidden="true">{t.icon}</svg>
            {t.name}
          </a>
        ))}
        <div className="absolute bottom-6 left-1/2 flex h-[15px] w-[432px] -translate-x-1/2 overflow-hidden rounded-full bg-linear-to-b from-[#4b4b4b] to-[#7b7b7b]">
          <span className="ml-auto w-12 bg-linear-to-r from-transparent to-[#b4b4b4]" />
        </div>
      </nav>
    </div>
  );
}
